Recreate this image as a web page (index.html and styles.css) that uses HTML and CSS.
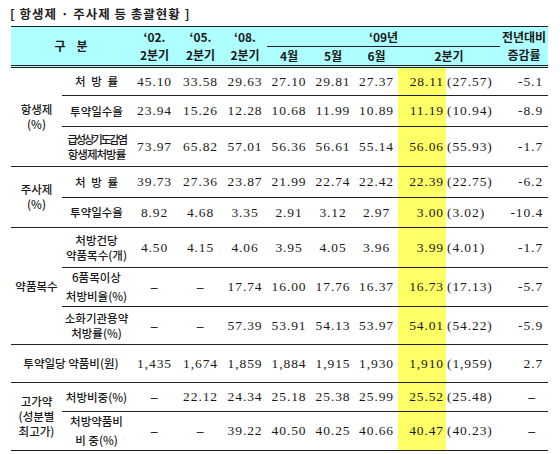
FILE: index.html
```html
<!DOCTYPE html>
<html>
  <head>
    <meta charset="utf-8">
    <title>항생제 · 주사제 등 총괄현황</title>
    <link rel="stylesheet" href="styles.css">
  </head>
  <body>
    <p class="title">[ 항생제 · 주사제 등 총괄현황 ]</p>
    <table class="summary">
      <colgroup>
        <col style="width:51px"><col style="width:69px"><col style="width:47px">
        <col style="width:45px"><col style="width:44px"><col style="width:44px">
        <col style="width:44px"><col style="width:43px"><col style="width:48px">
        <col style="width:54px"><col style="width:48px">
      </colgroup>
      <thead>
        <tr class="hrow">
          <th colspan="2" rowspan="2" class="gubun">구 &nbsp; &nbsp;분</th>
          <th rowspan="2">‘02.<br>2분기</th>
          <th rowspan="2">‘05.<br>2분기</th>
          <th rowspan="2">‘08.<br>2분기</th>
          <th colspan="5" class="year">‘09년</th>
          <th rowspan="2" class="rate">전년대비<br>증감률</th>
        </tr>
        <tr class="hrow">
          <th>4월</th>
          <th>5월</th>
          <th>6월</th>
          <th colspan="2">2분기</th>
        </tr>
      </thead>
      <tbody>
        <tr class="r29">
          <td rowspan="3" class="group">항생제<br>(%)</td>
          <td class="item spaced">처 방 률</td>
          <td>45.10</td><td>33.58</td><td>29.63</td><td>27.10</td><td>29.81</td><td>27.37</td>
          <td class="hl">28.11</td><td class="prev">(27.57)</td><td class="diff">-5.1</td>
        </tr>
        <tr class="r31">
          <td class="item">투약일수율</td>
          <td>23.94</td><td>15.26</td><td>12.28</td><td>10.68</td><td>11.99</td><td>10.89</td>
          <td class="hl">11.19</td><td class="prev">(10.94)</td><td class="diff">-8.9</td>
        </tr>
        <tr class="r40">
          <td class="item"><span class="squeeze">급성상기도감염</span><br><span class="squeeze2">항생제처방률</span></td>
          <td>73.97</td><td>65.82</td><td>57.01</td><td>56.36</td><td>56.61</td><td>55.14</td>
          <td class="hl">56.06</td><td class="prev">(55.93)</td><td class="diff">-1.7</td>
        </tr>
        <tr class="r31">
          <td rowspan="2" class="group">주사제<br>(%)</td>
          <td class="item spaced">처 방 률</td>
          <td>39.73</td><td>27.36</td><td>23.87</td><td>21.99</td><td>22.74</td><td>22.42</td>
          <td class="hl">22.39</td><td class="prev">(22.75)</td><td class="diff">-6.2</td>
        </tr>
        <tr class="r30">
          <td class="item">투약일수율</td>
          <td>8.92</td><td>4.68</td><td>3.35</td><td>2.91</td><td>3.12</td><td>2.97</td>
          <td class="hl">3.00</td><td class="prev">(3.02)</td><td class="diff">-10.4</td>
        </tr>
        <tr class="r40">
          <td rowspan="3" class="group">약품복수</td>
          <td class="item">처방건당<br>약품목수(개)</td>
          <td>4.50</td><td>4.15</td><td>4.06</td><td>3.95</td><td>4.05</td><td>3.96</td>
          <td class="hl">3.99</td><td class="prev">(4.01)</td><td class="diff">-1.7</td>
        </tr>
        <tr class="r38">
          <td class="item tall">6품목이상<br>처방비율(%)</td>
          <td class="dashcell">–</td><td class="dashcell">–</td><td>17.74</td><td>16.00</td><td>17.76</td><td>16.37</td>
          <td class="hl">16.73</td><td class="prev">(17.13)</td><td class="diff">-5.7</td>
        </tr>
        <tr class="r38">
          <td class="item">소화기관용약<br>처방률(%)</td>
          <td class="dashcell">–</td><td class="dashcell">–</td><td>57.39</td><td>53.91</td><td>54.13</td><td>53.97</td>
          <td class="hl">54.01</td><td class="prev">(54.22)</td><td class="diff">-5.9</td>
        </tr>
        <tr class="r38">
          <td colspan="2" class="group">투약일당 약품비(원)</td>
          <td>1,435</td><td>1,674</td><td>1,859</td><td>1,884</td><td>1,915</td><td>1,930</td>
          <td class="hl">1,910</td><td class="prev">(1,959)</td><td class="diff">2.7</td>
        </tr>
        <tr class="r29">
          <td rowspan="2" class="group narrow">고가약<br>(성분별<br>최고가)</td>
          <td class="item">처방비중(%)</td>
          <td class="dashcell">–</td><td>22.12</td><td>24.34</td><td>25.18</td><td>25.38</td><td>25.99</td>
          <td class="hl">25.52</td><td class="prev">(25.48)</td><td class="diff dash">–</td>
        </tr>
        <tr class="r37">
          <td class="item tall">처방약품비<br>비 중(%)</td>
          <td class="dashcell">–</td><td class="dashcell">–</td><td>39.22</td><td>40.50</td><td>40.25</td><td>40.66</td>
          <td class="hl">40.47</td><td class="prev">(40.23)</td><td class="diff dash">–</td>
        </tr>
      </tbody>
    </table>
  </body>
</html>
```

FILE: styles.css
```css
body{
	margin:0;
	padding:5px 12px 0 11px;
	background:#ffffff;
	color:#222222;
	font-family:"Noto Sans CJK KR", sans-serif;
}

.title{
	margin:0 0 4px -1px;
	height:17px;
	line-height:17px;
	font-size:12.5px;
	font-weight:bold;
	letter-spacing:1px;
	color:#222222;
}

.summary{
	width:537px;
	border-collapse:collapse;
	table-layout:fixed;
}

/* header */
.summary th{
	background:#aeffff;
	font-size:12px;
	font-weight:bold;
	line-height:18px;
	padding:0;
	text-align:center;
	color:#1a1a1a;
}
.summary thead tr:first-child th{
	border-top:1px solid #222222;
}
.hrow{
	height:20px;
}
.summary th[rowspan="2"],
.summary tr:nth-child(2) th{
	border-bottom:3px double #222222;
}
.year{
	border-bottom:1px solid #222222;
}
.gubun{
	font-size:12.5px;
	padding-left:2px;
}

/* body */
.summary td{
	padding:0;
	border-bottom:1px solid #222222;
	text-align:center;
	vertical-align:middle;
	font-family:"Liberation Serif", serif;
	font-size:13.5px;
	letter-spacing:0.9px;
	color:#1a1a1a;
}
.summary td.group,
.summary td.item{
	font-family:"Noto Sans CJK KR", sans-serif;
	font-size:11.5px;
	font-weight:500;
	letter-spacing:0;
	line-height:15px;
}
.summary td.tall{
	line-height:19px;
}
.summary td.spaced{
	word-spacing:3px;
}
.summary td.narrow{
	line-height:15px;
}
.squeeze{
	letter-spacing:-2.2px;
}
.squeeze2{
	letter-spacing:-1px;
}

.r29{height:29px;}
.r30{height:30px;}
.r31{height:31px;}
.r37{height:37px;}
.r38{height:38px;}
.r40{height:40px;}

.summary td.hl{
	background:#ffff66;
	text-align:right;
	padding-right:2px;
}
.summary td.prev{
	text-align:left;
	padding-left:1px;
}
.summary td.diff{
	text-align:right;
	padding-right:5px;
}
.summary td.dash{
	text-align:center;
	padding-right:0;
	padding-left:16px;
}
.summary td.dashcell,
.summary td.dash{
	font-weight:bold;
}
```
